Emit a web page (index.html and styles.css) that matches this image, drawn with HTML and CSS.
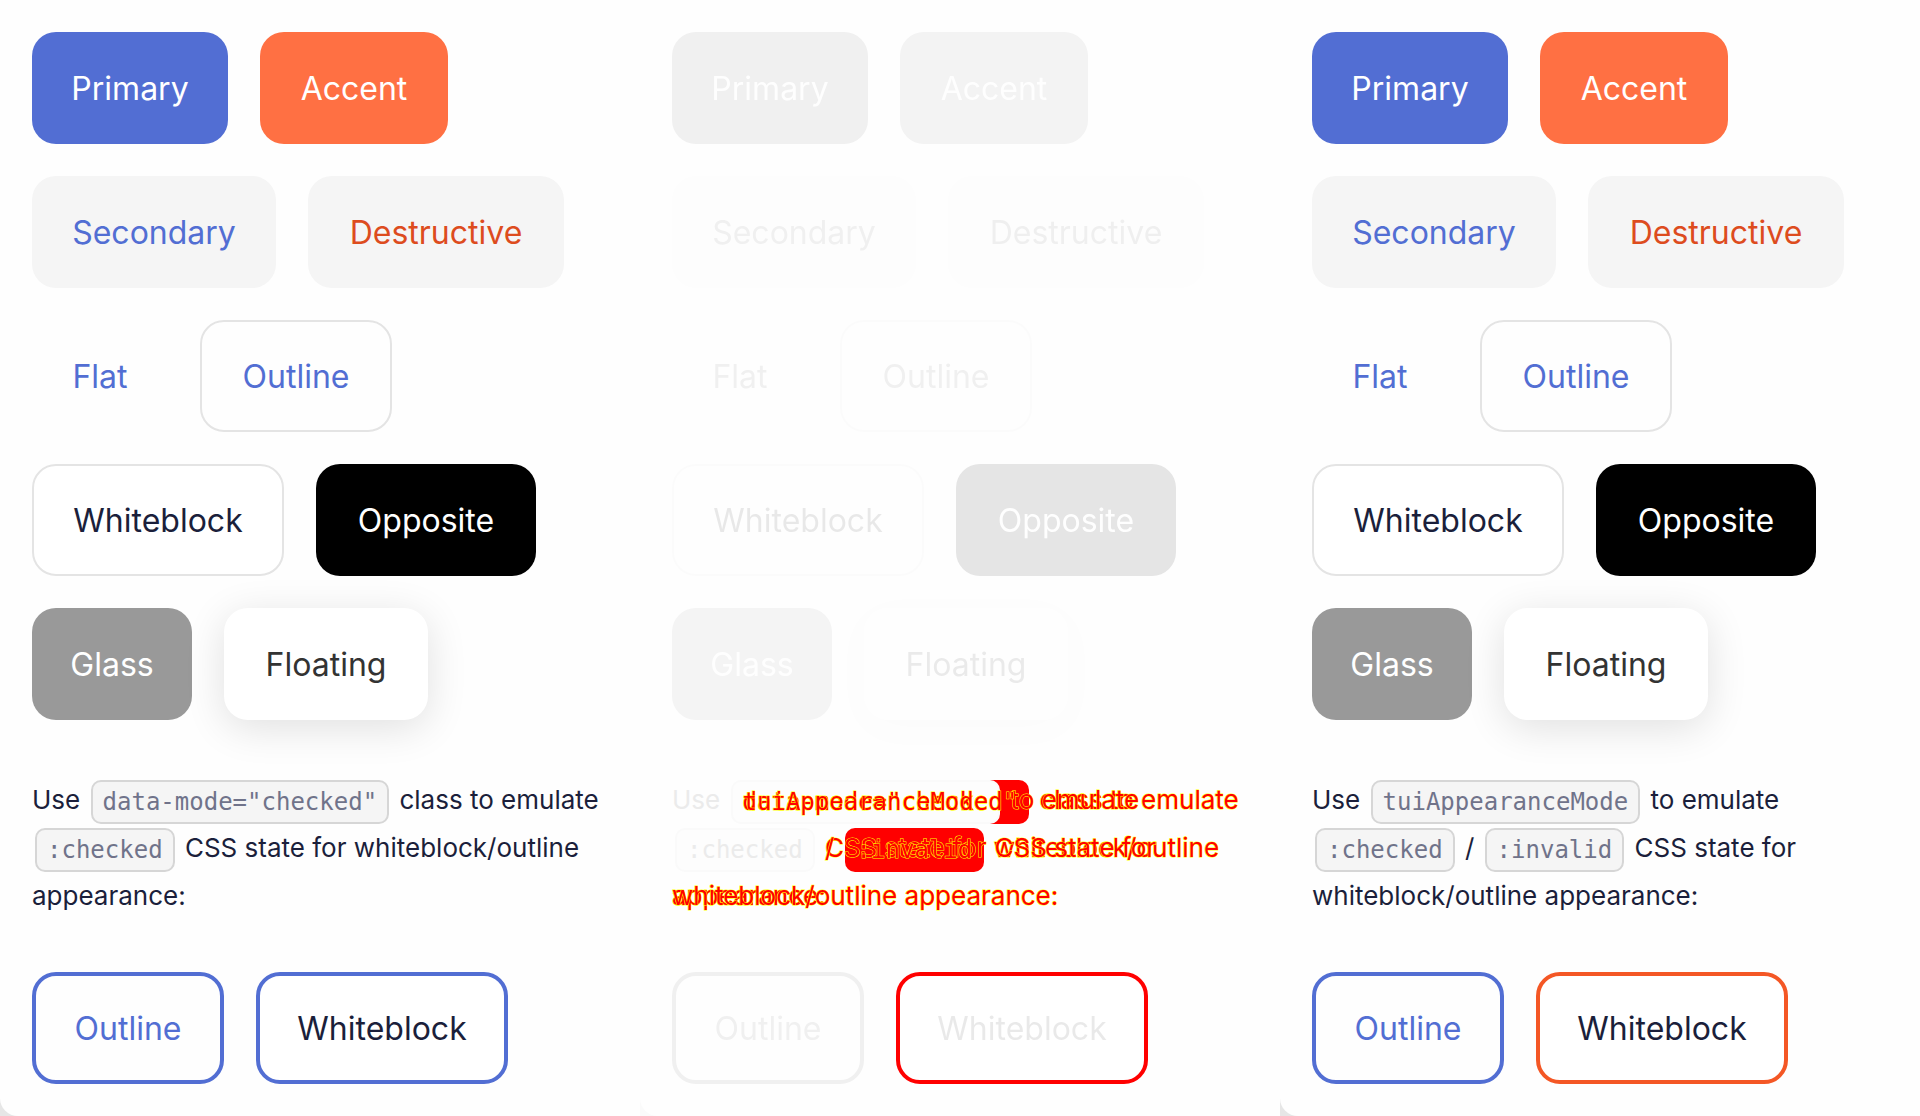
FILE: index.html
```html
<!DOCTYPE html>
<html lang="en">
<head>
<meta charset="utf-8">
<title>Appearance comparison</title>
<link rel="stylesheet" href="styles.css">
</head>
<body>
<main class="compare">
  <section class="panel">
    <div class="row"><button class="btn primary">Primary</button><button class="btn accent">Accent</button></div>
    <div class="row"><button class="btn secondary">Secondary</button><button class="btn destructive">Destructive</button></div>
    <div class="row"><button class="btn flat">Flat</button><button class="btn outline">Outline</button></div>
    <div class="row"><button class="btn whiteblock">Whiteblock</button><button class="btn opposite">Opposite</button></div>
    <div class="row"><button class="btn glass">Glass</button><button class="btn floating">Floating</button></div>
    <p class="note">Use <code>data-mode="checked"</code> class to emulate<br><code>:checked</code> CSS state for whiteblock/outline<br>appearance:</p>
    <div class="row"><button class="btn outline checked">Outline</button><button class="btn whiteblock checked">Whiteblock</button></div>
  </section>

  <section class="panel">
    <div class="row faded"><button class="btn primary">Primary</button><button class="btn accent">Accent</button></div>
    <div class="row faded"><button class="btn secondary">Secondary</button><button class="btn destructive">Destructive</button></div>
    <div class="row faded"><button class="btn flat">Flat</button><button class="btn outline">Outline</button></div>
    <div class="row faded"><button class="btn whiteblock">Whiteblock</button><button class="btn opposite">Opposite</button></div>
    <div class="row faded"><button class="btn glass">Glass</button><button class="btn floating">Floating</button></div>
    <div class="layers">
      <p class="note marked"><span class="faint">Use</span> <code class="changed tail">data-mode="checked"</code> class to emulate<br><code class="faint">:checked</code> CSS state for whiteblock/outline<br>appearance:</p>
      <p class="note marked"><span class="same">Use</span> <code>tuiAppearanceMode</code> to emulate<br><code class="same">:checked</code> / <code class="changed">:invalid</code> CSS state for<br>whiteblock/outline appearance:</p>
    </div>
    <div class="row"><button class="btn outline checked faded">Outline</button><button class="btn whiteblock error"><span class="faded">Whiteblock</span></button></div>
  </section>

  <section class="panel">
    <div class="row"><button class="btn primary">Primary</button><button class="btn accent">Accent</button></div>
    <div class="row"><button class="btn secondary">Secondary</button><button class="btn destructive">Destructive</button></div>
    <div class="row"><button class="btn flat">Flat</button><button class="btn outline">Outline</button></div>
    <div class="row"><button class="btn whiteblock">Whiteblock</button><button class="btn opposite">Opposite</button></div>
    <div class="row"><button class="btn glass">Glass</button><button class="btn floating">Floating</button></div>
    <p class="note">Use <code>tuiAppearanceMode</code> to emulate<br><code>:checked</code> / <code>:invalid</code> CSS state for<br>whiteblock/outline appearance:</p>
    <div class="row"><button class="btn outline checked">Outline</button><button class="btn whiteblock invalid">Whiteblock</button></div>
  </section>
</main>
</body>
</html>
```
FILE: styles.css
```css
* {
  box-sizing: border-box;
}

body {
  margin: 0;
  color: #1b1f3b;
  font-family: Inter, "Liberation Sans", sans-serif;
}

.compare {
  display: grid;
  grid-template-columns: repeat(3, 1fr);
  min-height: 100vh;
  background: linear-gradient(90deg, #e6e6e6 33%, #fafafa 33% 66%, #e6e6e6 66%);
}

.panel {
  display: flex;
  flex-direction: column;
  gap: 32px;
  padding: 32px;
  background: #fefefe;
  border-bottom-left-radius: 18px;
}

.row {
  display: flex;
  gap: 32px;
}

.btn {
  height: 112px;
  padding: 2px 0 0;
  border: 0;
  border-radius: 24px;
  background: transparent;
  color: #526ed3;
  font-family: inherit;
  font-size: 32px;
  line-height: 40px;
  white-space: nowrap;
}

.primary { width: 196px; background: #526ed3; color: #fff; }
.accent { width: 188px; background: #ff7043; color: #fff; }
.secondary { width: 244px; background: #f5f5f5; }
.destructive { width: 256px; background: #f5f5f5; color: #dd4c1e; }
.flat { width: 136px; }
.outline { width: 192px; border: 2px solid #e4e4e4; }
.whiteblock { width: 252px; border: 2px solid #e4e4e4; background: #fff; color: #1b1f3b; }
.opposite { width: 220px; background: #000; color: #fff; }
.glass { width: 160px; background: #999; color: #fff; }
.floating { width: 204px; background: #fff; color: #333; box-shadow: 0 8px 40px rgba(0, 0, 0, 0.12); }

.checked { border: 4px solid #526ed3; }
.invalid { border: 4px solid #f45725; }
.error { border: 4px solid #f00; }

.note {
  margin: 24px 0 20px;
  font-size: 26px;
  line-height: 48px;
  white-space: nowrap;
}

.note code {
  display: inline-block;
  height: 44px;
  margin: 0 3px;
  padding: 0 10px;
  border: 2px solid #d6d6d6;
  border-radius: 10px;
  background: #f5f5f5;
  color: #70738a;
  font-family: "DejaVu Sans Mono", monospace;
  font-size: 24px;
  line-height: 40px;
  vertical-align: middle;
}

.faded {
  filter: grayscale(1) opacity(0.1);
}

/* Both versions of the note share one cell, with every chip painted below both texts. */
.layers {
  display: grid;
  isolation: isolate;
}

.layers .note {
  grid-area: 1 / 1;
}

.marked {
  color: #f00;
  -webkit-text-stroke: 1px #ff0;
  paint-order: stroke fill;
}

.marked code {
  position: relative;
  border-color: transparent;
  background: none;
  color: #f00;
}

.marked code::before {
  content: "";
  position: absolute;
  inset: -2px;
  z-index: -1;
  border: 2px solid #fafafa;
  border-radius: 10px;
  background: #fdfdfd;
}

.marked .changed::before {
  border: 0;
  background: #f00;
}

.marked .tail::before {
  background: linear-gradient(90deg, #fdfdfd 80%, #f00 80%);
}

.marked .faint {
  color: #ebebeb;
  -webkit-text-stroke: 0;
}

.marked .same {
  visibility: hidden;
}
```
